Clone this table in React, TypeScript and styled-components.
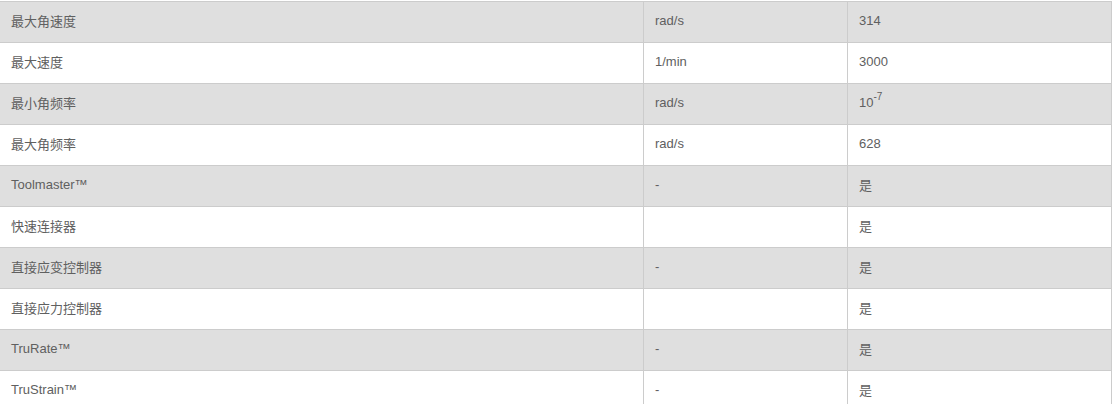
import React from "react";
import styled, { createGlobalStyle } from "styled-components";

interface RowData {
  name: string;
  unit: string;
  value: React.ReactNode;
}

const Global = createGlobalStyle`
  body {
    margin: 0;
    background: #fff;
    font-family: "Liberation Sans", Arial, "Noto Sans CJK SC", sans-serif;
  }
`;

const Wrap = styled.div`
  width: 1112px;
  padding-top: 1px;
  overflow: hidden;
`;

const Table = styled.table`
  border-collapse: collapse;
  width: 1112px;
  margin-left: -1px;
  table-layout: fixed;
`;

const Row = styled.tr<{ $shade: boolean }>`
  background: ${(p) => (p.$shade ? "#dfdfdf" : "#fff")};
`;

const Cell = styled.td<{ $w: number }>`
  width: ${(p) => p.$w}px;
  height: 41px;
  box-sizing: border-box;
  padding: 0 0 3px 11px;
  border: 1px solid #cccccc;
  font-size: 13px;
  color: #606060;
  vertical-align: middle;
  white-space: nowrap;
`;

const Sup = styled.sup`
  font-size: 10px;
  vertical-align: 7px;
  line-height: 0;
`;

const rows: RowData[] = [
  { name: "最大角速度", unit: "rad/s", value: "314" },
  { name: "最大速度", unit: "1/min", value: "3000" },
  {
    name: "最小角频率",
    unit: "rad/s",
    value: (
      <>
        10<Sup>-7</Sup>
      </>
    ),
  },
  { name: "最大角频率", unit: "rad/s", value: "628" },
  { name: "Toolmaster™", unit: "-", value: "是" },
  { name: "快速连接器", unit: "", value: "是" },
  { name: "直接应变控制器", unit: "-", value: "是" },
  { name: "直接应力控制器", unit: "", value: "是" },
  { name: "TruRate™", unit: "-", value: "是" },
  { name: "TruStrain™", unit: "-", value: "是" },
];

export default function App() {
  return (
    <Wrap>
      <Global />
      <Table>
        <tbody>
          {rows.map((r, i) => (
            <Row key={r.name} $shade={i % 2 === 0}>
              <Cell $w={644}>{r.name}</Cell>
              <Cell $w={204}>{r.unit}</Cell>
              <Cell $w={264}>{r.value}</Cell>
            </Row>
          ))}
        </tbody>
      </Table>
    </Wrap>
  );
}
